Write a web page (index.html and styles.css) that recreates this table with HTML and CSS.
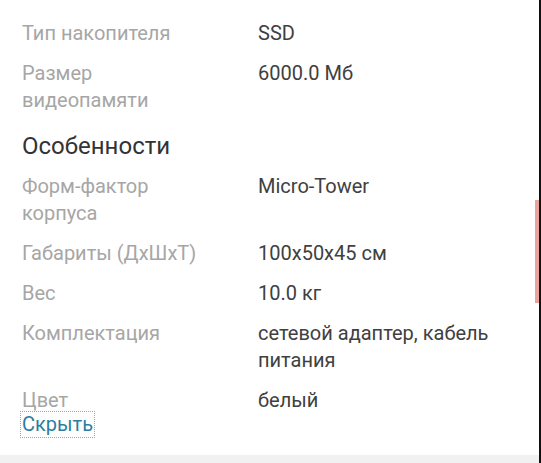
FILE: index.html
```html
<!DOCTYPE html>
<html lang="ru">
<head>
<meta charset="utf-8">
<title>Характеристики</title>
<link rel="stylesheet" href="styles.css">
</head>
<body>
<div class="page">
  <div class="specs">
    <div class="row"><div class="label">Тип накопителя</div><div class="value">SSD</div></div>
    <div class="row"><div class="label">Размер видеопамяти</div><div class="value">6000.0 Мб</div></div>
    <h2 class="section">Особенности</h2>
    <div class="row"><div class="label">Форм-фактор корпуса</div><div class="value">Micro-Tower</div></div>
    <div class="row"><div class="label">Габариты (ДхШхТ)</div><div class="value">100x50x45 см</div></div>
    <div class="row"><div class="label">Вес</div><div class="value">10.0 кг</div></div>
    <div class="row"><div class="label">Комплектация</div><div class="value">сетевой адаптер, кабель питания</div></div>
    <div class="row last"><div class="label">Цвет</div><div class="value">белый</div></div>
    <a class="toggle" href="#">Скрыть</a>
  </div>
  <div class="footer"></div>
</div>
<div class="thumb"></div>
</body>
</html>
```
FILE: styles.css
```css
html, body {
  margin: 0;
  padding: 0;
  background: #ffffff;
}
body {
  font-family: Roboto, "Noto Sans", Arial, sans-serif;
  font-size: 20px;
  line-height: 27px;
}
.page {
  width: 539px;
  height: 463px;
  border-right: 2px solid #111;
  display: flex;
  flex-direction: column;
  overflow: hidden;
}
.specs {
  flex: 1;
  padding: 20px 0 0 22px;
}
.row {
  display: grid;
  grid-template-columns: 190px 255px;
  column-gap: 46px;
  margin-bottom: 13px;
}
.row.last {
  margin-bottom: 0;
}
.label {
  color: #a6a6a6;
}
.value {
  color: #404040;
}
.section {
  margin: 17px 0 12px;
  font-size: 24px;
  line-height: 30px;
  font-weight: 400;
  color: #333333;
}
.toggle {
  display: block;
  width: fit-content;
  margin-top: -2px;
  margin-left: -1px;
  padding: 0 1px;
  line-height: 25px;
  color: #2b7ea1;
  text-decoration: none;
  outline: 1px dotted #9ab;
}
.footer {
  height: 8px;
  background: #f1f1f1;
}
.thumb {
  position: fixed;
  left: 535px;
  top: 200px;
  width: 4px;
  height: 103px;
  background: #e9a39c;
}
```
